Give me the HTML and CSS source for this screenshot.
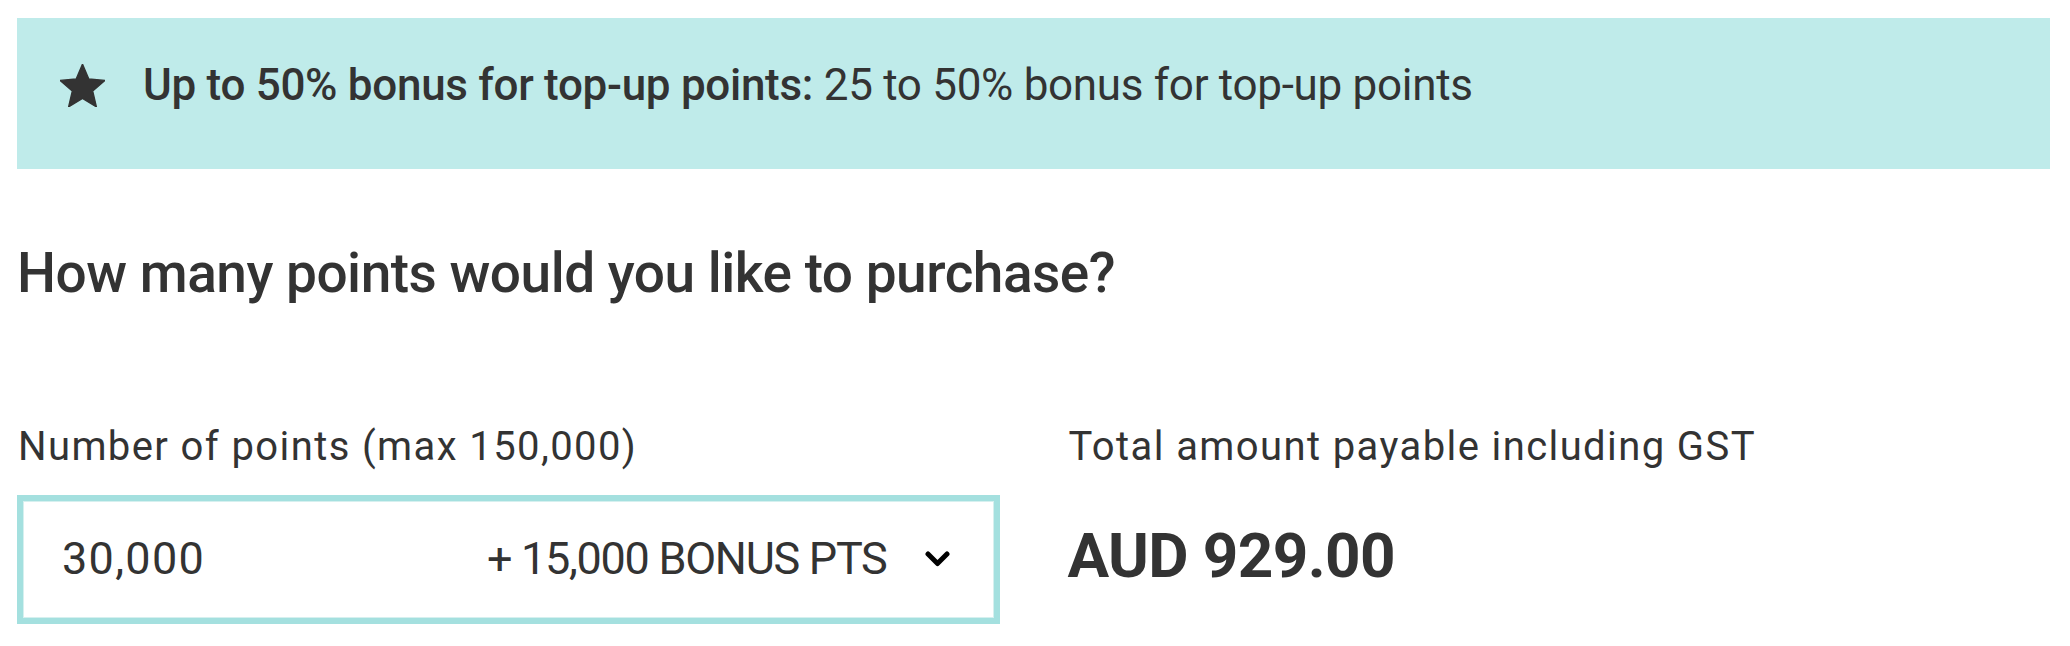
FILE: index.html
```html
<!doctype html>
<html>
	<head>
		<title>Buy points</title>
		<link rel="stylesheet" href="styles.css">
	</head>
	<body>
		<div class="promo">
			<svg class="promo-icon" viewBox="2 2 20 19" width="45" height="43" aria-hidden="true">
				<path d="M12 17.27L18.18 21l-1.64-7.03L22 9.24l-7.19-.61L12 2 9.19 8.63 2 9.24l5.46 4.73L5.82 21z" fill="#333" stroke="#333" stroke-width="0.6" stroke-linejoin="round"/>
			</svg>
			<p class="promo-text"><strong>Up to 50% bonus for top-up points:</strong> 25 to 50% bonus for top-up points</p>
		</div>

		<h2 class="question">How many points would you like to purchase?</h2>

		<section class="fields">
			<div class="field">
				<label class="field-label" for="points">Number of points (max 150,000)</label>
				<div class="select" id="points">
					<span class="select-value">30,000</span>
					<span class="select-bonus">+ 15,000 BONUS PTS</span>
					<svg class="select-arrow" viewBox="0 0 25 17" width="25" height="17" aria-hidden="true">
						<path d="M3 3l9.5 9.5L22 3" fill="none" stroke="#000" stroke-width="5" stroke-linecap="round" stroke-linejoin="round"/>
					</svg>
				</div>
			</div>

			<div class="field">
				<div class="field-label">Total amount payable including GST</div>
				<div class="total">AUD 929.00</div>
			</div>
		</section>
	</body>
</html>
```

FILE: styles.css
```css
body {
	margin: 18px 20px 0 17px;
	color: rgb(51,51,51);
	font-family: Roboto, "Liberation Sans", Arial, sans-serif;
	font-weight: 400;
	line-height: 1.2;
}

	.promo {
		display: flex;
		align-items: center;
		background: rgb(191,235,234);
		padding: 41px 45px 57px 43px;
	}

	.promo-icon {
		flex: none;
		margin-right: 38px;
	}

	.promo-text {
		margin: 0;
		font-size: 44px;
		letter-spacing: -0.3px;
	}

	.promo-text strong {
		font-weight: 500;
	}

	.question {
		margin: 71px 0 0;
		font-size: 55px;
		font-weight: 500;
		letter-spacing: -0.5px;
	}

	.fields {
		display: grid;
		grid-template-columns: 1fr 1fr;
		column-gap: 68px;
		margin-top: 117px;
	}

	.field-label {
		display: block;
		font-size: 40px;
		letter-spacing: 1.4px;
		margin: 0 0 0 1px;
	}

	.select {
		display: flex;
		align-items: center;
		box-sizing: border-box;
		height: 129px;
		margin-top: 24px;
		padding: 0 44px 0 39px;
		border: 6px solid rgb(164,224,223);
		box-shadow: inset 0 0 0 1px rgb(214,240,239);
		font-size: 45px;
	}

	.select-value {
		flex: 1;
		letter-spacing: 1.3px;
	}

	.select-bonus {
		letter-spacing: -1.3px;
	}

	.select-arrow {
		margin-left: 38px;
	}

	.total {
		margin-top: 48px;
		font-size: 62px;
		font-weight: 700;
		letter-spacing: -0.6px;
	}
```
